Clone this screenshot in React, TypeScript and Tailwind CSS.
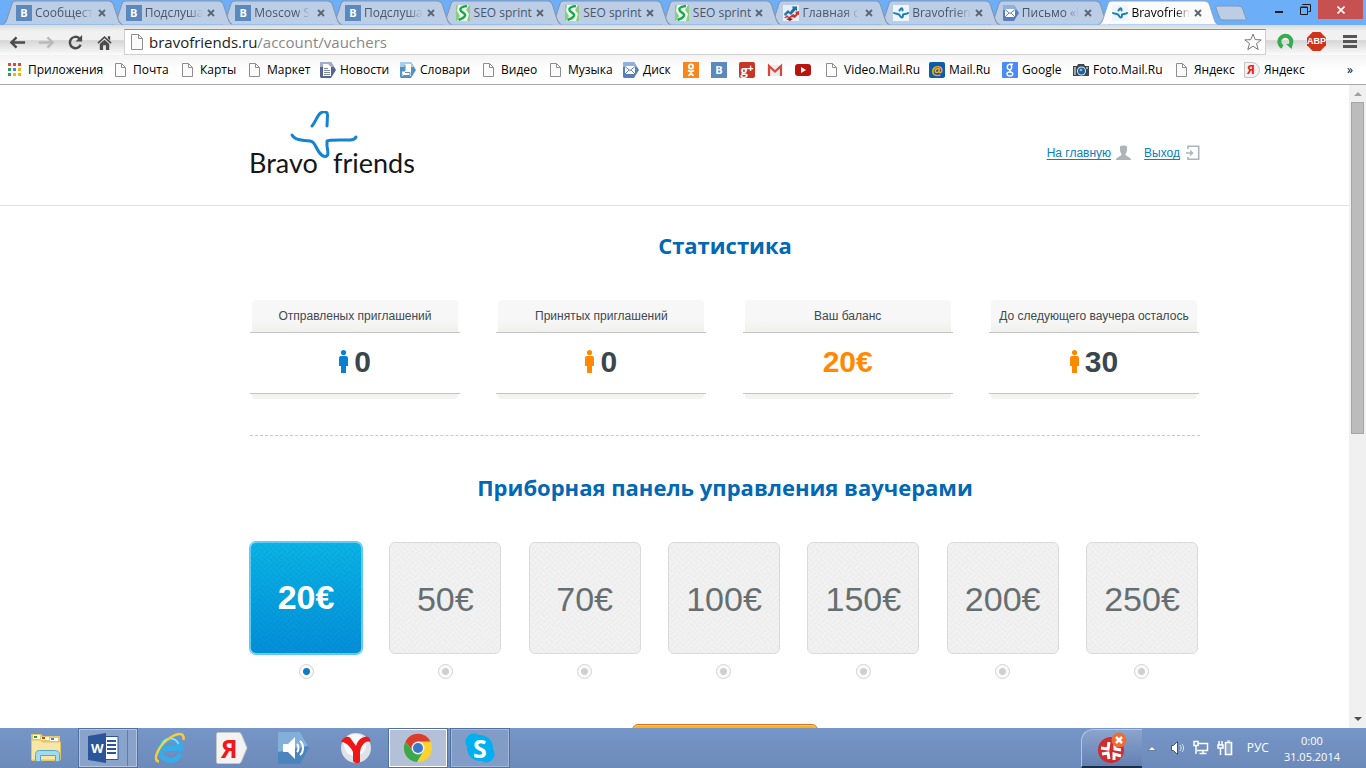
import { useState } from "react";
import type { ReactNode } from "react";

type Tab = { title: string; icon: string; active?: boolean };

const tabs: Tab[] = [
  { title: "Сообщест", icon: "vk" },
  { title: "Подслуша", icon: "vk" },
  { title: "Moscow S", icon: "vk" },
  { title: "Подслуша", icon: "vk" },
  { title: "SEO sprint", icon: "seo" },
  { title: "SEO sprint", icon: "seo" },
  { title: "SEO sprint", icon: "seo" },
  { title: "Главная с", icon: "chart" },
  { title: "Bravofrien", icon: "bravo" },
  { title: "Письмо «l", icon: "mail" },
  { title: "Bravofrien", icon: "bravo", active: true },
];

const bookmarks = [
  { title: "Приложения", icon: "apps", width: "w-[107px]" },
  { title: "Почта", icon: "page", width: "w-[67px]" },
  { title: "Карты", icon: "page", width: "w-[67px]" },
  { title: "Маркет", icon: "page", width: "w-[71px]" },
  { title: "Новости", icon: "news", width: "w-[80px]" },
  { title: "Словари", icon: "dict", width: "w-[83px]" },
  { title: "Видео", icon: "page", width: "w-[67px]" },
  { title: "Музыка", icon: "page", width: "w-[73px]" },
  { title: "Диск", icon: "mail", width: "w-[60px]" },
  { title: "", label: "Одноклассники", icon: "ok", width: "w-[28px]" },
  { title: "", label: "ВКонтакте", icon: "vk", width: "w-[28px]" },
  { title: "", label: "Google+", icon: "gplus", width: "w-[28px]" },
  { title: "", label: "Gmail", icon: "gmail", width: "w-[28px]" },
  { title: "", label: "YouTube", icon: "youtube", width: "w-[31px]" },
  { title: "Video.Mail.Ru", icon: "page", width: "w-[103px]" },
  { title: "Mail.Ru", icon: "mailru", width: "w-[73px]" },
  { title: "Google", icon: "google", width: "w-[71px]" },
  { title: "Foto.Mail.Ru", icon: "camera", width: "w-[103px]" },
  { title: "Яндекс", icon: "page", width: "w-[68px]" },
  { title: "Яндекс", icon: "yandex", width: "w-[71px]" },
];

const stats = [
  { label: "Отправленых приглашений", value: "0", person: "text-[#0a80d0]", color: "text-[#3b464c]" },
  { label: "Принятых приглашений", value: "0", person: "text-[#ff8a00]", color: "text-[#3b464c]" },
  { label: "Ваш баланс", value: "20€", person: "", color: "text-[#ff8a00]" },
  { label: "До следующего ваучера осталось", value: "30", person: "text-[#ff8a00]", color: "text-[#3b464c]" },
];

const vouchers = [20, 50, 70, 100, 150, 200, 250];

function Favicon({ name }: { name: string }) {
  let art: ReactNode = null;
  if (name === "vk") {
    return (
      <span className="flex h-4 w-4 shrink-0 items-center justify-center bg-[#5b88bd] text-[11px] font-bold leading-4 text-white">В</span>
    );
  }
  if (name === "gplus") {
    return (
      <span className="flex h-4 w-4 shrink-0 items-center justify-center rounded-xs bg-[#cb3524] text-[13px] font-bold leading-3 text-white">
        g<span className="mb-1 text-[10px] leading-none">+</span>
      </span>
    );
  }
  if (name === "mailru") {
    return (
      <span className="flex h-4 w-4 shrink-0 items-center justify-center rounded-xs bg-[#0b5cab] text-[13px] font-bold leading-4 text-[#ffa61f]">@</span>
    );
  }
  if (name === "yandex") {
    return (
      <span className="flex h-4 w-4 shrink-0 items-center rounded-r-lg border border-[#c4c4c4] bg-[#f1f1f1] pl-[2px] text-[12px] font-bold leading-4 text-[#ee1c1c]">Я</span>
    );
  }
  if (name === "seo") {
    art = (
      <>
        <path fill="#8ccb80" d="M1 0h14v16H1z" />
        <path fill="#f1faee" d="M3 0h11L11 5l3 4-2 7H2l3-5-3-5z" />
        <path fill="none" stroke="#18a850" strokeWidth="2.400" d="M12 1C4 2 4 5 8 7.500S10 13 3.500 15" />
      </>
    );
  } else if (name === "google") {
    art = (
      <>
        <rect width="16" height="16" rx="1" fill="#4c8bf5" />
        <g fill="none" stroke="#fff" strokeWidth="1.400">
          <ellipse cx="7.500" cy="5" rx="2.200" ry="2.600" />
          <path d="M7 2.300h4M9 7.500c-2 1-1.500 1.800 0 2.500" />
          <ellipse cx="7.800" cy="12" rx="2.900" ry="2" />
        </g>
      </>
    );
  } else if (name === "chart") {
    art = (
      <>
        <path fill="#e8eff8" d="M0 0h16v16H0z" />
        <path fill="#1d6fae" d="M1 9l4-4 2 2 3-4-1.500-1.500H14V6l-1.500-1L8 10 5.500 8 2 11z" />
        <path fill="#d2322d" d="M1 13l3-3 2 2 4-3 2 1 1-2-1-1 4-1v4l-1-.5-3 3.500-3-1-3 2-2-2-1 1z" />
        <path fill="#7b2626" d="M3 14l4-1 3 1-3 2z" />
      </>
    );
  } else if (name === "bravo") {
    art = (
      <>
        <path fill="#eef5fb" d="M0 0h16v16H0z" />
        <g fill="none" stroke="#1a80b8" strokeWidth="2" strokeLinecap="round" strokeLinejoin="round">
          <path d="M1 8c1.500 1 4 .5 5 1.500s1.500 3 3 3c1.200 0 .8-2 1-3 1.500-1 3.500 0 5-1.500" />
          <path d="M6.500 5.500C8 2.500 9.500 2.500 9.500 5.500" />
        </g>
      </>
    );
  } else if (name === "mail") {
    art = (
      <>
        <path fill="#5a7dbb" d="M1 0h10l5 8-5 8H1L0 15V1z" />
        <path fill="#8fb0e0" d="M1 0h10l3 5H0V1z" />
        <path fill="#fff" d="M2 4h10v8H2z" />
        <path fill="none" stroke="#5f86c4" d="M2 4.500l5 4 5-4M2 12l4-4M12 12L8 8" />
      </>
    );
  } else if (name === "news") {
    art = (
      <>
        <path fill="#56648f" d="M1 0h10l5 8-5 8H1L0 15V1z" />
        <path fill="#a3adc8" d="M1 0h10l3 5H0V1z" />
        <path fill="#fff" d="M3 2h5l3 3v9H3z" />
        <path stroke="#7c87a8" d="M4 6.500h4M4 8.500h6M4 10.500h6M4 12.500h6" />
      </>
    );
  } else if (name === "dict") {
    art = (
      <>
        <path fill="#5590c0" d="M1 0h10l5 8-5 8H1L0 15V1z" />
        <path fill="#a9cde8" d="M1 0h10l3 5H0V1z" />
        <path fill="#fff" d="M5 2h6v10H5zM1 9h4l1 2h5v3H2z" />
        <path fill="none" stroke="#5a93c2" d="M5 3v6H1.500v3l2 1.500H10V10.500H5" />
      </>
    );
  } else if (name === "apps") {
    art = (
      <>
        <path fill="#ea4335" d="M0 1h3v3H0zM5 1h3v3H5zM10 1h3v3h-3z" />
        <path fill="#2f9e55" d="M0 6h3v3H0zM0 11h3v3H0z" />
        <path fill="#4285f4" d="M5 6h3v3H5z" />
        <path fill="#f4b400" d="M10 6h3v3h-3zM5 11h3v3H5zM10 11h3v3h-3z" />
      </>
    );
  } else if (name === "page") {
    art = <path fill="#fbfbfb" stroke="#8e8e8e" d="M.5 1.500h6l4 4v9H.5zM6.500 1.500v4h4" />;
  } else if (name === "ok") {
    art = (
      <>
        <path fill="#f7861b" d="M0 0h16v16H0z" />
        <g fill="none" stroke="#fff" strokeWidth="1.800">
          <circle cx="8" cy="4.500" r="2.200" />
          <path d="M5 8.500c2 1.300 4 1.300 6 0M8 9.500v1M5.500 14L8 11.200l2.500 2.800" />
        </g>
      </>
    );
  } else if (name === "gmail") {
    art = (
      <>
        <path fill="#ececec" d="M1 3h14v11H1z" />
        <path fill="none" stroke="#d8473c" strokeWidth="2.200" d="M2 14V4l6 5.500L14 4v10" />
      </>
    );
  } else if (name === "youtube") {
    art = (
      <>
        <rect y="2" width="16" height="12" rx="3" fill="#b8130e" />
        <path fill="#fff" d="M6 5l5 3-5 3z" />
      </>
    );
  } else if (name === "camera") {
    art = (
      <>
        <path fill="#3d4650" d="M0 4h4l1-2h6l1 2h4v10H0z" />
        <path fill="#9aa5b0" d="M1 5h2v8H1zM13 5h2v2h-2z" />
        <circle cx="8.500" cy="9" r="4.500" fill="#dfe7ee" />
        <circle cx="8.500" cy="9" r="3.500" fill="#1c5f9c" />
        <circle cx="8" cy="8" r="1.300" fill="#7cc6f2" />
      </>
    );
  }
  return (
    <svg className="h-4 w-4 shrink-0" viewBox="0 0 16 16" aria-hidden="true">
      {art}
    </svg>
  );
}

function TabStrip() {
  return (
    <div className="flex h-[25px] bg-[#6caef7] pl-[2px]">
      <div className="flex min-w-0 flex-1">
        {tabs.map((tab, i) => (
          <div
            key={i}
            className="relative flex h-[25px] min-w-0 flex-1 items-center pl-[14px]"
            style={{ zIndex: tab.active ? 20 : tabs.length - i }}
          >
            <svg className="absolute left-0 top-0 h-[25px] w-[110%]" viewBox="0 0 120 25" preserveAspectRatio="none" aria-hidden="true">
              <path
                d="M0 24.500C3 24 4 22 5 19L9.500 5C10.500 2 11 1 14 1H106C109 1 110 2 111 5L115.500 19C116.500 22 117.500 24 120 24.500"
                fill={tab.active ? "#fbfbfb" : "#bccee6"}
                stroke={tab.active ? "#8fa6c4" : "#8595ad"}
              />
            </svg>
            <span className="relative flex min-w-0 flex-1 items-center gap-[3px]">
              <Favicon name={tab.icon} />
              <span
                className={`whitespace-nowrap text-[12px] leading-4 ${
                  tab.icon === "seo" ? "" : "[mask-image:linear-gradient(to_right,black_75%,transparent)]"
                } ${tab.active ? "text-black" : "text-[#4a5568]"}`}
              >
                {tab.title}
              </span>
            </span>
            <button className="relative mr-[4px] flex h-3 w-3 shrink-0 items-center justify-center" aria-label="Закрыть вкладку">
              <svg className="h-2 w-2" viewBox="0 0 8 8">
                <path d="M1 1l6 6M7 1L1 7" stroke="#5a6472" strokeWidth="1.800" />
              </svg>
            </button>
          </div>
        ))}
      </div>
      <button className="ml-[7px] mt-[5px] h-4 w-8" aria-label="Новая вкладка">
        <svg className="h-4 w-8" viewBox="0 0 32 16">
          <path d="M3 1h20c3 0 4 1 5 4l3 8c.5 1.500 0 2-1.500 2H9c-3 0-4-1-5-4L1 3C.6 1.500 1.500 1 3 1z" fill="#bccee6" stroke="#8096b6" />
        </svg>
      </button>
      <div className="ml-[19px] mr-[3px] flex items-start">
        <button className="flex h-[19px] w-[26px] items-center justify-center pt-[5px]" aria-label="Свернуть">
          <span className="h-[2px] w-2 bg-[#1b1b1b]" />
        </button>
        <button className="flex h-[19px] w-[26px] items-center justify-center" aria-label="Восстановить">
          <svg className="h-[11px] w-[11px]" viewBox="0 0 11 11" fill="none" stroke="#1b1b1b">
            <path d="M.5 3.500h7v7h-7zM.5 3h7M2.500 1V.5h8v7h-2" />
          </svg>
        </button>
        <button className="flex h-[19px] w-[45px] items-center justify-center bg-[#c75050]" aria-label="Закрыть">
          <svg className="h-2 w-2" viewBox="0 0 8 8">
            <path d="M.5.5l7 7M7.500.5l-7 7" stroke="#fff" strokeWidth="1.600" />
          </svg>
        </button>
      </div>
    </div>
  );
}

function Toolbar() {
  return (
    <div className="flex h-[30px] items-center bg-[linear-gradient(#d9d9d9_0,#f1f1f1_20%,#f1f1f1_50%,#d6d6d6_52%,#fbfbfb_100%)] pl-[9px]">
      <div className="flex w-[115px] gap-[12px] pt-[4px]">
        <button aria-label="Назад">
          <svg className="h-[17px] w-[17px]" viewBox="0 0 18 18" fill="none" stroke="#4b4b4b" strokeWidth="2.600">
            <path d="M2 9h15M8 3.500L2.500 9 8 14.500" />
          </svg>
        </button>
        <button aria-label="Вперёд">
          <svg className="h-[17px] w-[17px]" viewBox="0 0 18 18" fill="none" stroke="#b9b9b9" strokeWidth="2.600">
            <path d="M1 9h15M10 3.500L15.500 9 10 14.500" />
          </svg>
        </button>
        <button aria-label="Обновить">
          <svg className="h-[17px] w-[17px]" viewBox="0 0 18 18">
            <path d="M14.500 11.500A6 6 0 1 1 13 4.500" fill="none" stroke="#4b4b4b" strokeWidth="2.600" />
            <path d="M16 1v7H9z" fill="#4b4b4b" />
          </svg>
        </button>
        <button aria-label="Домой">
          <svg className="h-[17px] w-[17px]" viewBox="0 0 18 18">
            <path d="M9 2l7.500 7-1.200 1.300L9 4.600l-6.300 5.700L1.500 9zM12.500 2.500H15V7l-2.500-2.400z" fill="#4b4b4b" />
            <path d="M4 10.500L9 6l5 4.500V17h-3.500v-5h-3v5H4z" fill="#4b4b4b" />
          </svg>
        </button>
      </div>
      <div className="mt-[3px] flex h-[26px] min-w-0 flex-1 items-center border border-[#cfcfcf] border-t-[#8f8f8f] bg-white pl-[6px] pr-[3px]">
        <svg className="h-4 w-[13px] shrink-0" viewBox="0 0 13 16">
          <path d="M.5.5h7l4 4v11H.5zM7.500.5v4h4" fill="#fafafa" stroke="#8e8e8e" />
        </svg>
        <a href="#" className="ml-[5px] flex-1 truncate text-[15px] leading-5 text-[#888]">
          <span className="text-[#222]">bravofriends.ru</span>/account/vauchers
        </a>
        <button aria-label="Добавить в закладки">
          <svg className="h-[18px] w-[18px]" viewBox="0 0 18 18">
            <path d="M9 1l2.200 5.600 6 .3-4.700 3.700 1.700 6L9 13.200 3.800 16.600l1.700-6L.8 6.900l6-.3z" fill="#fff" stroke="#777" />
          </svg>
        </button>
      </div>
      <div className="flex w-[100px] items-center pl-[11px] pt-[3px]">
        <svg className="h-[17px] w-[17px]" viewBox="0 0 17 17">
          <path d="M5.500 14A6 6 0 1 1 12 13.500" fill="none" stroke="#36ab52" strokeWidth="4" />
          <path d="M9 11h6v5z" fill="#36ab52" />
        </svg>
        <span className="ml-[13px] flex h-[19px] w-[19px] items-center justify-center bg-[#cf3418] font-['Liberation_Sans',sans-serif] text-[9px] font-bold leading-none text-white [clip-path:polygon(30%_0,70%_0,100%_30%,100%_70%,70%_100%,30%_100%,0_70%,0_30%)]">ABP</span>
        <button className="ml-[17px] flex w-[14px] flex-col gap-[2px]" aria-label="Меню">
          <span className="h-[3px] w-[14px] bg-[#555]" />
          <span className="h-[3px] w-[14px] bg-[#555]" />
          <span className="h-[3px] w-[14px] bg-[#555]" />
        </button>
      </div>
    </div>
  );
}

function BookmarksBar() {
  return (
    <nav className="flex h-[30px] items-center border-b border-[#a9a9a9] bg-linear-to-b from-[#f3f3f3] to-white to-50% pl-2 pr-[13px] text-[12px] leading-4 text-black">
      {bookmarks.map((b, i) => (
        <a key={i} href="#" aria-label={b.label} className={`flex shrink-0 items-center whitespace-nowrap ${b.width} ${b.icon === "page" ? "gap-[2px]" : "gap-[4px]"}`}>
          <Favicon name={b.icon} />
          {b.title}
        </a>
      ))}
      <button className="ml-auto" aria-label="Другие закладки">»</button>
    </nav>
  );
}

function Logo() {
  return (
    <a href="#" aria-label="Bravo friends">
      <svg className="h-[72px] w-[164px]" viewBox="0 0 164 72">
        <g fill="none" stroke="#1683d0" strokeWidth="3" strokeLinecap="round" strokeLinejoin="round">
          <path d="M62 15C65 12 67 5 70 2.500C73 0 77.500 0 77.500 4L77 15" />
          <path d="M42 24C44 28 48 29 54 29.500C60 30 62 29 65 34C68 40 71 45.500 75 45.500C79 45.500 78 41 77 35L77 30C79 28.500 91 29 100 29C104 29 105 28 106 26" />
        </g>
        <g fill="#161616" fontFamily="Lato, sans-serif" fontSize="27">
          <text x="-1" y="62">Bravo</text>
          <text x="83" y="62">friends</text>
        </g>
      </svg>
    </a>
  );
}

function SiteHeader() {
  return (
    <header className="flex h-[121px] items-start justify-between border-b border-[#e3e3e3] pl-[250px] pr-[149px] pt-[26px]">
      <Logo />
      <div className="flex items-center pt-[34px] text-[12px] leading-4 text-[#0a80c0]">
        <a href="#" className="underline underline-offset-2">На главную</a>
        <svg className="ml-[5px] h-4 w-[15px]" viewBox="0 0 15 16" fill="#adb5b6">
          <path d="M4 1.500C4.500 0 10.500 0 11 1.500V5.500C11 7 9.800 8 9.500 9.500c.5 2 5.500 2.500 5.500 5.500H0c0-3 5-3.500 5.500-5.500C5.200 8 4 7 4 5.500z" />
        </svg>
        <a href="#" className="ml-[13px] underline underline-offset-2">Выход</a>
        <svg className="ml-[6px] h-4 w-[14px]" viewBox="0 0 14 16" fill="none" stroke="#adb5b6">
          <path strokeWidth="1.600" d="M2 4V1.300h10.700v13H2V12" />
          <path strokeWidth="1.400" d="M0 8h6.500M4 5.500L6.500 8 4 10.500" />
        </svg>
      </div>
    </header>
  );
}

function Stats() {
  return (
    <section className="border-b border-dashed border-[#c8c8c8] pb-[36px] pt-[23px]">
      <h2 className="text-center font-['Trebuchet_MS','Open_Sans',sans-serif] text-[22px] font-bold leading-8 text-[#0068b4]">Статистика</h2>
      <div className="mt-[39px] flex justify-between pr-px">
        {stats.map((s) => (
          <div key={s.label} className="w-[210px] text-center">
            <div className="mx-[2px] h-8 whitespace-nowrap rounded-t-sm bg-linear-to-b from-[#f7f7f7] from-60% to-[#f0f0ee] text-[12px] leading-8 text-[#404850]">
              {s.label}
            </div>
            <div className={`flex h-[62px] items-center justify-center gap-[6px] border-y border-[#c4c4c4] pb-[2px] text-[30px] font-bold leading-none ${s.color}`}>
              {s.person && (
                <svg className={`mb-px h-[23px] w-[9px] ${s.person}`} viewBox="0 0 9 23" fill="currentColor" aria-hidden="true">
                  <circle cx="4.500" cy="2.600" r="2.600" />
                  <path d="M2 6h5c1.500 0 2 1 2 2.500V16H7v7H2v-7H0V8.500C0 7 .5 6 2 6z" />
                </svg>
              )}
              <span>{s.value}</span>
            </div>
            <div className="mx-[2px] h-[5px] rounded-b-sm bg-[#f3f3f0]" />
          </div>
        ))}
      </div>
    </section>
  );
}

function TilePattern({ id, color }: { id: string; color: string }) {
  return (
    <svg className="absolute inset-0 h-full w-full" aria-hidden="true">
      <defs>
        <pattern id={id} width="16" height="16" patternUnits="userSpaceOnUse" patternTransform="rotate(45)">
          <path d="M0 2h8M0 6h8M10 0v8M14 0v8M8 10h8M8 14h8M2 8v8M6 8v8" stroke={color} strokeWidth="1.500" fill="none" />
        </pattern>
      </defs>
      <rect width="100%" height="100%" fill={`url(#${id})`} />
    </svg>
  );
}

function Vouchers() {
  const [selected, setSelected] = useState(20);

  return (
    <section className="pt-[35px]">
      <h2 className="text-center font-['Trebuchet_MS','Open_Sans',sans-serif] text-[22px] font-bold leading-8 text-[#0068b4]">
        Приборная панель управления ваучерами
      </h2>
      <div className="mt-[39px] flex justify-between pr-[2px]">
        {vouchers.map((v) => (
          <label key={v} className="flex w-[112px] cursor-pointer flex-col items-center gap-[10px]">
            <span
              className={`relative flex h-[112px] w-full items-center justify-center overflow-hidden rounded-md border text-[34px] leading-none ${
                v === selected
                  ? "border-[#5fcbf2] bg-linear-to-b from-[#0bb5e6] to-[#058fd8] pb-[2px] font-bold text-white ring-1 ring-[#5fcbf2]"
                  : "border-[#dadada] bg-[#f2f2f2] pt-[2px] text-[#666e70]"
              }`}
            >
              <TilePattern id={`tile-${v}`} color={v === selected ? "rgba(0,70,150,.1)" : "#ebebeb"} />
              <span className="relative">{v}€</span>
            </span>
            <input
              type="radio"
              name="voucher"
              checked={v === selected}
              onChange={() => setSelected(v)}
              className="h-[15px] w-[15px] appearance-none rounded-full border border-[#d2d2d2] bg-[radial-gradient(circle,#cfcfcf_3px,#fafafa_4px)] checked:bg-[radial-gradient(circle,#0a7cc8_3px,#fafafa_4px)]"
            />
          </label>
        ))}
      </div>
      <div className="mt-[45px] flex justify-center">
        <button className="h-10 w-[186px] rounded-md border border-[#d9702a] bg-[#fcb316] shadow-[inset_0_1px_0_#ffd25e]" aria-label="Получить ваучер" />
      </div>
    </section>
  );
}

function Scrollbar() {
  return (
    <div className="flex w-[17px] shrink-0 flex-col items-center bg-[#f0f0f0]">
      <svg className="h-[17px] w-[17px]" viewBox="0 0 17 17"><path d="M5 11l4-4 4 4z" fill="#a0a0a0" /></svg>
      <div className="h-[332px] w-[13px] border border-[#a5a5a5] bg-[#bcbcbc]" />
      <svg className="mt-auto h-[17px] w-[17px]" viewBox="0 0 17 17"><path d="M5 6l4 4 4-4z" fill="#505050" /></svg>
    </div>
  );
}

const taskClass = "flex h-10 w-[60px] items-center justify-center";

function Taskbar() {
  return (
    <footer className="flex h-10 shrink-0 items-center justify-between bg-linear-to-b from-[#7696c8] to-[#6c8ab9] text-[12px] text-white">
      <div className="flex gap-[2px] pl-4">
        <button className={taskClass} aria-label="Проводник">
          <svg className="h-8 w-8" viewBox="0 0 32 32">
            <path fill="#e9c766" d="M1 2h10l2 2h17v25H2z" />
            <path fill="#fff" d="M3 3h7v4H3zM11 5h8v3h-8zM20 6h8v3h-8z" />
            <path fill="#2aa32a" d="M4 4h3v2H4z" />
            <path fill="#d33b22" d="M12 5h3v2h-3z" />
            <path fill="#2a8fd8" d="M21 6h3v2h-3z" />
            <path fill="#f8e7a4" stroke="#dfc26a" d="M1.500 8h9l2 2h18v18h-29z" />
            <path fill="#9fdcf0" stroke="#5aa4c6" d="M5.500 29.500v-7c0-3 2-4 4-4h15c3 0 5 1 5 4v7h-4v-6h-15v6z" />
          </svg>
        </button>
        <button className={`${taskClass} border border-[#52709f] bg-[#8aa3cb] shadow-[inset_0_0_0_1px_#b3c4de]`} aria-label="Word">
          <span className="relative h-[30px] w-[31px]">
            <svg className="absolute inset-0 h-[30px] w-[31px]" viewBox="0 0 31 30">
              <path fill="#fff" stroke="#2b579a" d="M17 3.500h13v23H17z" />
              <path stroke="#2b579a" strokeWidth="2" d="M19 8h9M19 12h9M19 16h9M19 20h9" />
              <path fill="#2b579a" d="M0 3l18-3v30L0 27z" />
            </svg>
            <span className="absolute left-[3px] top-[7px] text-[13px] font-bold leading-4">W</span>
          </span>
          <span className="ml-[8px] h-[36px] w-px bg-[#607ca8]" />
        </button>
        <button className={taskClass} aria-label="Internet Explorer">
          <svg className="h-8 w-8" viewBox="0 0 32 32" fill="none">
            <path d="M26.500 21.500A10.500 10.500 0 1 1 27 16.500H9" stroke="#36ace9" strokeWidth="5" />
            <path d="M24.500 12A9 9 0 0 0 8 12" stroke="#a4e2fc" strokeWidth="1.500" />
            <path d="M5 29.500C-2 29 4 15 13 8S31-1 29.500 8" stroke="#f7cd3c" strokeWidth="2.500" />
          </svg>
        </button>
        <button className={taskClass} aria-label="Яндекс">
          <span className="relative h-8 w-8">
            <svg className="absolute inset-0 h-8 w-8" viewBox="0 0 32 32">
              <path fill="#f3f3f3" stroke="#c6c6c6" d="M2.500.5h20c1.500 0 2 .5 3 2L31 16l-5.500 13c-1 2-1.500 2.500-3 2.500h-20C1 31.500.5 31 .5 29.500v-27C.5 1 1 .5 2.500.5z" />
            </svg>
            <span className="absolute left-[5px] top-[3px] text-[25px] font-bold leading-[26px] text-[#f01818]">Я</span>
          </span>
        </button>
        <button className={taskClass} aria-label="Звук">
          <svg className="h-8 w-8" viewBox="0 0 32 32">
            <path fill="#4a86bd" d="M0 0h22l9 16-9 16H0z" />
            <path fill="#82b0da" d="M0 0h22l8 14L0 20z" />
            <path fill="#fff" d="M5 12h5l7-7v22l-7-7H5z" />
            <path fill="none" stroke="#fff" strokeWidth="2" d="M19 12c2 2 2 6 0 8M22 9c4 3 4 11 0 14" />
          </svg>
        </button>
        <button className={taskClass} aria-label="Яндекс.Браузер">
          <svg className="h-8 w-8" viewBox="0 0 32 32">
            <circle cx="16" cy="16" r="15" fill="#dfe2e6" />
            <circle cx="15" cy="13" r="11" fill="#fafafa" />
            <path fill="#ee1717" d="M1 10c2-5 8-7 10-3l5 7c2-6 6-10 12-9 2 1 3 4 2 5-5-2-9 4-10 10v10c-2 2-6 1-7-1V20C11 15 5 9 1 10z" />
          </svg>
        </button>
        <button className={`${taskClass} border border-[#52709f] bg-[#b3c0d8] shadow-[inset_0_0_0_1px_white]`} aria-label="Chrome">
          <svg className="h-[30px] w-[30px]" viewBox="0 0 30 30">
            <circle cx="15" cy="15" r="14" fill="#fcd22f" />
            <path fill="#dc3b30" d="M2.500 8.500A14 14 0 0 1 27.500 8.500H15L9.500 18z" />
            <path fill="#3aa84c" d="M2.500 8.500A14 14 0 0 0 14 29L20.500 18H9.500z" />
            <circle cx="15" cy="15" r="6.500" fill="#eef2f5" />
            <circle cx="15" cy="15" r="5" fill="#3b79c7" />
          </svg>
        </button>
        <button className={`${taskClass} border border-[#52709f] bg-[#819cc6] shadow-[inset_0_0_0_1px_#a3b7d6]`} aria-label="Skype">
          <span className="relative flex h-[30px] w-[30px] items-center justify-center">
            <svg className="absolute inset-0 h-[30px] w-[30px]" viewBox="0 0 30 30" fill="#00aff0">
              <circle cx="15" cy="15" r="13" />
              <circle cx="9" cy="9" r="8.500" />
              <circle cx="21" cy="21" r="8.500" />
            </svg>
            <span className="relative text-[25px] font-bold leading-none">S</span>
          </span>
        </button>
      </div>
      <div className="flex items-center pr-[26px]">
        <button className="flex h-[39px] w-[61px] items-center justify-center rounded-tl-xl border-l border-t border-[#b5c6e0] border-b-2 border-b-[#1c2c49] bg-linear-to-b from-[#8ba4cc] to-[#6280b2]" aria-label="Антивирус">
          <svg className="h-8 w-8" viewBox="0 0 32 32">
            <circle cx="15" cy="18" r="13" fill="#cf2c30" />
            <path stroke="#fff" strokeWidth="3" fill="none" d="M5 16l7 1 1-7M19 11v6l6 1M6 22l6-1 1 6M25 24l-7-2v6" />
            <circle cx="23" cy="8" r="7.500" fill="#ee6b35" />
            <path stroke="#fff" strokeWidth="2.500" d="M20 5l6 6M26 5l-6 6" />
          </svg>
        </button>
        <svg className="ml-[5px] h-2 w-[10px]" viewBox="0 0 10 8"><path d="M1 6.500l4-4 4 4z" fill="#fff" stroke="#41577c" strokeWidth=".6" /></svg>
        <svg className="ml-[14px] h-4 w-[13px]" viewBox="0 0 13 16">
          <path d="M.5 5.500h2l4-4v13l-4-4h-2z" fill="#fff" stroke="#41577c" />
          <path d="M9 5c1.500 2 1.500 4 0 6M11 4c2 2 2 6 0 8" stroke="#dbe4f2" fill="none" />
        </svg>
        <svg className="ml-[9px] h-4 w-4" viewBox="0 0 16 16" fill="none">
          <path d="M5 3.500h9.500v7H4M6.500 13.500h7M10 11v2" stroke="#fff" strokeWidth="1.500" />
          <path d="M1 1.500h4v4H1zM3 6v8" stroke="#fff" strokeWidth="1.500" />
        </svg>
        <svg className="ml-[8px] h-4 w-4" viewBox="0 0 16 16" fill="none">
          <path d="M2 1v4M5 1v4M1 5h5v3H1zM3.500 8v7" stroke="#fff" strokeWidth="1.500" />
          <path d="M8.500 2.500h6v12h-6z" fill="#8fa8cc" stroke="#fff" strokeWidth="1.600" />
          <path d="M10 1h3" stroke="#fff" />
        </svg>
        <span className="ml-[14px]">РУС</span>
        <time className="ml-[15px] pt-px text-center text-[11px] leading-4">
          0:00
          <br />
          31.05.2014
        </time>
      </div>
    </footer>
  );
}

export default function App() {
  return (
    <div className="flex h-screen flex-col overflow-hidden bg-white font-['Segoe_UI','Open_Sans',sans-serif]">
      <div className="shrink-0">
        <TabStrip />
        <Toolbar />
        <BookmarksBar />
      </div>
      <div className="flex min-h-0 flex-1">
        <main className="min-w-0 flex-1 overflow-hidden font-['Liberation_Sans',Arial,sans-serif]">
          <SiteHeader />
          <div className="pl-[250px] pr-[149px]">
            <Stats />
            <Vouchers />
          </div>
        </main>
        <Scrollbar />
      </div>
      <Taskbar />
    </div>
  );
}
